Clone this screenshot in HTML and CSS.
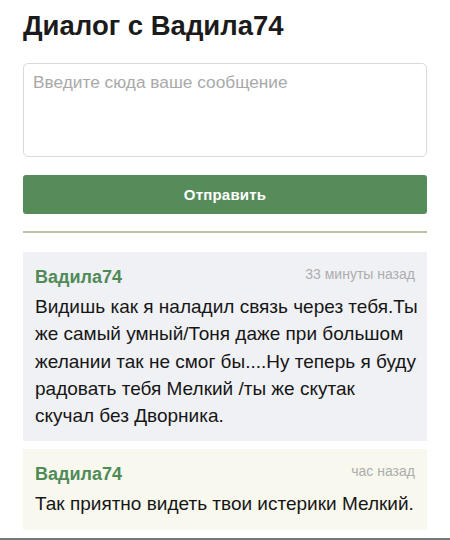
FILE: index.html
```html
<!DOCTYPE html>
<html lang="ru">
<head>
<meta charset="utf-8">
<title>Диалог с Вадила74</title>
<link rel="stylesheet" href="styles.css">
</head>
<body>
<div class="page">
  <h1 class="title">Диалог с Вадила74</h1>
  <form class="compose">
    <textarea class="compose-input" placeholder="Введите сюда ваше сообщение"></textarea>
    <button type="button" class="compose-send">Отправить</button>
  </form>
  <hr class="divider">
  <div class="messages">
    <div class="message message-in">
      <div class="message-head">
        <span class="message-author">Вадила74</span>
        <span class="message-time">33 минуты назад</span>
      </div>
      <div class="message-text">Видишь как я наладил связь через тебя.Ты<br>же самый умный/Тоня даже при большом<br>желании так не смог бы....Ну теперь я буду<br>радовать тебя Мелкий /ты же скутак<br>скучал без Дворника.</div>
    </div>
    <div class="message message-alt">
      <div class="message-head">
        <span class="message-author">Вадила74</span>
        <span class="message-time">час назад</span>
      </div>
      <div class="message-text">Так приятно видеть твои истерики Мелкий.</div>
    </div>
  </div>
</div>
<div class="bottom-bar"></div>
</body>
</html>
```
FILE: styles.css
```css
* { box-sizing: border-box; }
html, body { margin: 0; padding: 0; background: #ffffff; }
body {
  font-family: "Liberation Sans", Arial, sans-serif;
  color: #1a1a1a;
  width: 450px;
  height: 540px;
  overflow: hidden;
  position: relative;
}
.page {
  padding: 0 23px;
}
.title {
  margin: 0;
  padding-top: 11px;
  font-size: 27.5px;
  line-height: 30px;
  font-weight: bold;
  color: #1b1b1b;
}
.compose {
  margin: 22px 0 0;
  display: flex;
  flex-direction: column;
}
.compose-input {
  display: block;
  width: 100%;
  height: 94px;
  border: 1px solid #dadada;
  border-radius: 5px;
  padding: 8px 9px;
  font-family: "Liberation Sans", Arial, sans-serif;
  font-size: 17.3px;
  line-height: 20px;
  resize: none;
  background: #fff;
  outline: none;
}
.compose-input::placeholder { color: #a9a9a9; }
.compose-send {
  margin-top: 18px;
  height: 39px;
  width: 100%;
  border: none;
  border-radius: 3px;
  background: #558c5a;
  color: #fff;
  font-family: "Liberation Sans", Arial, sans-serif;
  font-weight: bold;
  font-size: 15px;
  letter-spacing: 0.2px;
}
.divider {
  margin: 17px 0 0;
  border: none;
  height: 2px;
  background: #b8c3a6;
}
.messages {
  margin-top: 19px;
  display: flex;
  flex-direction: column;
  gap: 8px;
}
.message {
  padding: 13px 10px 12px 12px;
}
.message-in { background: #f0f1f5; }
.message-alt { background: #f8f8ee; }
.message-head {
  display: flex;
  justify-content: space-between;
  align-items: flex-start;
  height: 24px;
  padding-right: 2px;
}
.message-author {
  font-size: 18px;
  line-height: 24px;
  font-weight: bold;
  color: #4f8a57;
}
.message-time {
  font-size: 14px;
  line-height: 18px;
  color: #adadad;
}
.message-text {
  margin-top: 4px;
  font-size: 19px;
  line-height: 27.3px;
  color: #161616;
  white-space: nowrap;
}
.bottom-bar {
  position: absolute;
  left: 0;
  right: 0;
  bottom: 0;
  height: 2px;
  background: #6f7b7a;
}
```
